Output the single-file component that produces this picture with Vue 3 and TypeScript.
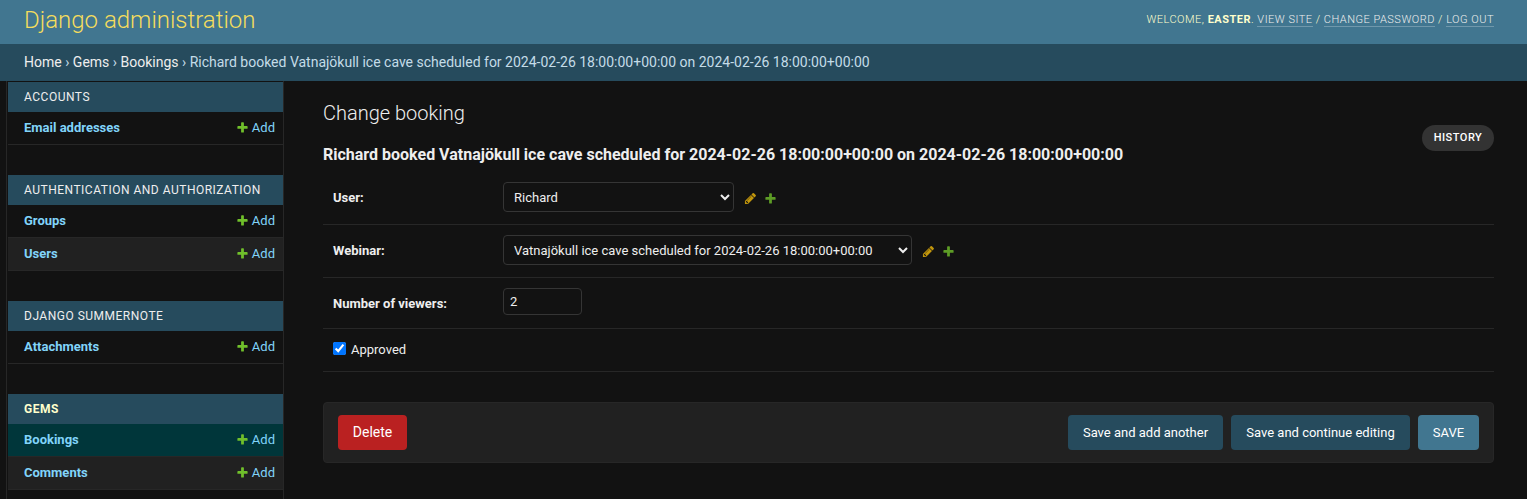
<script setup lang="ts">
import { ref } from 'vue'

interface Model {
  name: string
  current?: boolean
}
interface AppSection {
  name: string
  current?: boolean
  models: Model[]
}

const sections: AppSection[] = [
  { name: 'Accounts', models: [{ name: 'Email addresses' }] },
  { name: 'Authentication and Authorization', models: [{ name: 'Groups' }, { name: 'Users' }] },
  { name: 'Django Summernote', models: [{ name: 'Attachments' }] },
  { name: 'Gems', current: true, models: [{ name: 'Bookings', current: true }, { name: 'Comments' }] },
]

const webinarName = 'Vatnajökull ice cave scheduled for 2024-02-26 18:00:00+00:00'
const bookingName = `Richard booked ${webinarName} on 2024-02-26 18:00:00+00:00`

const user = ref('Richard')
const webinar = ref(webinarName)
const viewers = ref('2')
const approved = ref(true)

const plusPath =
  'M1600 796v192q0 40-28 68t-68 28h-416v416q0 40-28 68t-68 28h-192q-40 0-68-28t-28-68v-416h-416q-40 0-68-28t-28-68v-192q0-40 28-68t68-28h416v-416q0-40 28-68t68-28h192q40 0 68 28t28 68v416h416q40 0 68 28t28 68z'
const pencilPath =
  'M491 1536l91-91-235-235-91 91v107h128v128h107zm523-928q0-22-22-22-10 0-17 7l-542 542q-7 7-7 17 0 22 22 22 10 0 17-7l542-542q7-7 7-17zm-54-192l416 416-832 832h-416v-416zm683 96q0 53-37 90l-166 166-416-416 166-165q36-38 90-38 53 0 91 38l235 234q37 39 37 91z'
</script>

<template>
  <div class="page">
    <header class="header">
      <div class="branding">Django administration</div>
      <div class="user-tools">
        Welcome, <strong>Easter</strong>.
        <a href="#">View site</a> / <a href="#">Change password</a> / <a href="#">Log out</a>
      </div>
    </header>
    <nav class="breadcrumbs">
      <a href="#">Home</a> › <a href="#">Gems</a> › <a href="#">Bookings</a> › {{ bookingName }}
    </nav>
    <div class="main">
      <aside class="sidebar">
        <section v-for="s in sections" :key="s.name" class="module">
          <h2 class="caption" :class="{ current: s.current }">{{ s.name }}</h2>
          <div
            v-for="m in s.models"
            :key="m.name"
            class="model"
            :class="{ selected: m.current }"
          >
            <a class="model-link" href="#">{{ m.name }}</a>
            <a class="add-link" href="#">
              <svg width="13" height="13" viewBox="0 0 1792 1792"><path fill="#70bf2b" :d="plusPath" /></svg>
              <span>Add</span>
            </a>
          </div>
        </section>
      </aside>
      <main class="content">
        <div class="heading">
          <div>
            <h1>Change booking</h1>
            <h2 class="object-name">{{ bookingName }}</h2>
          </div>
          <a class="history" href="#">History</a>
        </div>
        <form @submit.prevent>
          <div class="form-row">
            <label for="user">User:</label>
            <select id="user" v-model="user" class="user-select">
              <option>Richard</option>
            </select>
            <span class="related">
              <svg width="13" height="13" viewBox="0 0 1792 1792"><path fill="#efb80b" :d="pencilPath" /></svg>
              <svg width="13" height="13" viewBox="0 0 1792 1792"><path fill="#70bf2b" :d="plusPath" /></svg>
            </span>
          </div>
          <div class="form-row">
            <label for="webinar">Webinar:</label>
            <select id="webinar" v-model="webinar" class="webinar-select">
              <option>{{ webinarName }}</option>
            </select>
            <span class="related">
              <svg width="13" height="13" viewBox="0 0 1792 1792"><path fill="#efb80b" :d="pencilPath" /></svg>
              <svg width="13" height="13" viewBox="0 0 1792 1792"><path fill="#70bf2b" :d="plusPath" /></svg>
            </span>
          </div>
          <div class="form-row viewers">
            <label for="viewers">Number of viewers:</label>
            <input id="viewers" v-model="viewers" type="text" />
          </div>
          <div class="form-row check">
            <input id="approved" v-model="approved" type="checkbox" />
            <label for="approved">Approved</label>
          </div>
          <div class="submit-row">
            <button type="button" class="delete">Delete</button>
            <button type="button" class="another">Save and add another</button>
            <button type="button" class="continue">Save and continue editing</button>
            <button type="submit" class="save">SAVE</button>
          </div>
        </form>
      </main>
    </div>
  </div>
</template>

<style>
body {
  margin: 0;
  background: #121212;
}
</style>

<style scoped>
* {
  box-sizing: border-box;
}
.page {
  height: 499px;
  overflow: hidden;
  display: flex;
  flex-direction: column;
  background: #121212;
  color: #eee;
  font-family: Roboto, 'Liberation Sans', sans-serif;
  font-size: 13px;
}
a {
  text-decoration: none;
}
h1,
h2 {
  margin: 0;
}
.header {
  flex: none;
  height: 44px;
  padding: 0 33px 0 24px;
  display: flex;
  justify-content: space-between;
  background: #417690;
  color: #ffc;
}
.branding {
  font-size: 24px;
  font-weight: 300;
  line-height: 40px;
  color: #f5dd5d;
}
.user-tools {
  font-size: 11px;
  font-weight: 300;
  line-height: 13px;
  padding-top: 13px;
  letter-spacing: 0.5px;
  text-transform: uppercase;
}
.user-tools strong {
  font-weight: 700;
}
.user-tools a {
  color: #eee;
  border-bottom: 1px solid rgba(255, 255, 255, 0.25);
}
.breadcrumbs {
  flex: none;
  height: 37px;
  padding-left: 24px;
  font-size: 14px;
  line-height: 36px;
  white-space: nowrap;
  background: #264b5d;
  color: #c4dce8;
}
.breadcrumbs a {
  color: #eee;
}
.main {
  flex: 1;
  min-height: 0;
  display: flex;
}
.sidebar {
  flex: none;
  width: 278px;
  margin-left: 6px;
  padding: 1px 0 0 1px;
  border: solid #272727;
  border-width: 0 1px;
  overflow: hidden;
}
.module {
  margin-bottom: 30px;
}
.caption {
  height: 30px;
  padding-left: 16px;
  background: #264b5d;
  color: #eee;
  font-size: 12px;
  font-weight: 400;
  line-height: 30px;
  letter-spacing: 0.5px;
  text-transform: uppercase;
}
.caption.current {
  color: #ffc;
  font-weight: 700;
}
.model {
  height: 33px;
  padding: 0 8px 0 16px;
  display: flex;
  justify-content: space-between;
  border-bottom: 1px solid #272727;
  line-height: 31px;
}
.model:nth-child(odd) {
  background: #212121;
}
.model.selected {
  background: #00363a;
}
.model a {
  color: #81d4fa;
}
.model-link {
  font-weight: 700;
}
.add-link {
  height: 31px;
  display: flex;
  align-items: center;
  gap: 3px;
}
.content {
  flex: 1;
  padding: 20px 33px 0 39px;
}
.heading {
  height: 71px;
  display: flex;
  justify-content: space-between;
}
h1 {
  font-size: 20px;
  font-weight: 300;
  line-height: 24px;
}
.object-name {
  margin-top: 20px;
  font-size: 16px;
  font-weight: 700;
  line-height: 20px;
}
.history {
  width: 72px;
  height: 26px;
  margin-top: 24px;
  border-radius: 15px;
  background: #333;
  color: #fff;
  font-size: 11px;
  font-weight: 500;
  line-height: 26px;
  letter-spacing: 0.5px;
  text-align: center;
  text-transform: uppercase;
}
.form-row {
  height: 53px;
  padding: 10px;
  display: flex;
  align-items: flex-start;
  border-bottom: 1px solid #272727;
}
.form-row label {
  width: 170px;
  font-weight: 700;
  line-height: 31px;
}
select,
input[type='text'] {
  margin: 0;
  border: 1px solid #353535;
  border-radius: 4px;
  background: #121212;
  color: #eee;
  font-family: inherit;
  font-size: 13px;
}
select {
  height: 30px;
  padding: 2px 6px;
}
.user-select {
  width: 231px;
}
.webinar-select {
  width: 409px;
}
.related {
  display: flex;
  gap: 7px;
  margin: 10px 0 0 10px;
  opacity: 0.8;
}
.viewers {
  height: 51px;
}
input[type='text'] {
  width: 79px;
  height: 27px;
  padding: 5px 6px;
}
.form-row.check {
  height: 43px;
}
.check input {
  width: 13px;
  height: 13px;
  margin: 3px 5px 0 0;
}
.form-row.check label {
  width: auto;
  font-weight: 400;
  line-height: 22px;
}
.submit-row {
  height: 61px;
  margin-top: 30px;
  padding: 12px 14px;
  display: flex;
  gap: 8px;
  border: 1px solid #272727;
  border-radius: 4px;
  background: #212121;
}
button {
  height: 35px;
  padding: 0;
  border: 0;
  border-radius: 4px;
  background: #264b5d;
  color: #fff;
  font-family: inherit;
  font-size: 13px;
}
.delete {
  width: 69px;
  margin-right: auto;
  padding-bottom: 2px;
  background: #ba2121;
  font-size: 14px;
}
.another {
  width: 155px;
}
.continue {
  width: 179px;
}
.save {
  width: 61px;
  background: #417690;
}
</style>
